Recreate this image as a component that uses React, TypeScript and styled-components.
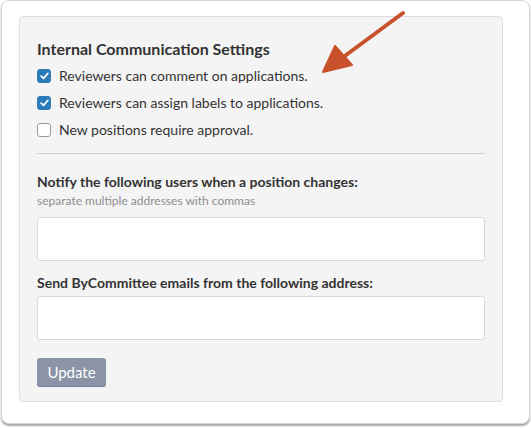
import styled, { createGlobalStyle } from "styled-components";

const GlobalStyle = createGlobalStyle`
  html, body {
    margin: 0;
    padding: 0;
    background: #ffffff;
  }
  body {
    font-family: Lato, "Liberation Sans", sans-serif;
    color: #333333;
  }
`;

const Frame = styled.div`
  position: relative;
  width: 531px;
  height: 428px;
  box-sizing: border-box;
  padding: 0 1px 4px 1px;
`;

const Card = styled.div`
  box-sizing: border-box;
  height: 424px;
  border: 1px solid #d6d6d6;
  border-radius: 8px;
  box-shadow: 0 2px 2px rgba(0, 0, 0, 0.35);
  background: #ffffff;
  padding: 15px 26px 22px 17px;
`;

const Panel = styled.form`
  box-sizing: border-box;
  height: 386px;
  background: #f4f4f4;
  border: 1px solid #dedede;
  border-radius: 4px;
  padding: 22px 17px 0 17px;
  display: flex;
  flex-direction: column;
`;

const Heading = styled.h3`
  margin: 0 0 3px;
  font-size: 16px;
  font-weight: 700;
  color: #333333;
  line-height: 20px;
`;

const CheckRow = styled.label`
  display: flex;
  align-items: center;
  gap: 8px;
  height: 27px;
  font-size: 14px;
  color: #333333;
`;

const Box = styled.span<{ $checked: boolean }>`
  width: 14px;
  height: 14px;
  box-sizing: border-box;
  border-radius: 3px;
  display: flex;
  align-items: center;
  justify-content: center;
  background: ${(p) => (p.$checked ? "#2b7bb9" : "#ffffff")};
  border: 1px solid ${(p) => (p.$checked ? "#2b7bb9" : "#9a9a9a")};
`;

const Divider = styled.hr`
  border: none;
  border-top: 1px solid #cfcfcf;
  margin: 10px 0 19px;
`;

const FieldLabel = styled.div`
  font-size: 14px;
  font-weight: 700;
  color: #333333;
  line-height: 18px;
`;

const Hint = styled.div`
  font-size: 12px;
  color: #8e8e8e;
  line-height: 16px;
  margin: 2px 0 4px;
`;

const Input = styled.input`
  box-sizing: border-box;
  width: 100%;
  height: 44px;
  margin: 4px 0 13px;
  border: 1px solid #d9d9d9;
  border-radius: 3px;
  background: #ffffff;
  outline: none;
`;

const Button = styled.button`
  align-self: flex-start;
  margin-top: 5px;
  width: 69px;
  height: 28px;
  border: none;
  border-radius: 3px;
  background: #8a94a6;
  box-shadow: 0 1px 0 #747e90;
  color: #ffffff;
  font-family: Lato, "Liberation Sans", sans-serif;
  font-size: 15px;
  padding: 0;
`;

const Arrow = styled.svg`
  position: absolute;
  left: 318px;
  top: 8px;
`;

const Check = () => (
  <svg width="9" height="8" viewBox="0 0 9 8">
    <path d="M1.2 4.2 L3.5 6.3 L7.8 1.5" fill="none" stroke="#fff" strokeWidth="1.8" strokeLinecap="round" strokeLinejoin="round" />
  </svg>
);

const options = [
  { text: "Reviewers can comment on applications.", checked: true },
  { text: "Reviewers can assign labels to applications.", checked: true },
  { text: "New positions require approval.", checked: false },
];

export default function App() {
  return (
    <>
      <GlobalStyle />
      <Frame>
        <Card>
          <Panel onSubmit={(e) => e.preventDefault()}>
            <Heading>Internal Communication Settings</Heading>
            {options.map((o) => (
              <CheckRow key={o.text}>
                <Box $checked={o.checked}>{o.checked && <Check />}</Box>
                {o.text}
              </CheckRow>
            ))}
            <Divider />
            <FieldLabel>Notify the following users when a position changes:</FieldLabel>
            <Hint>separate multiple addresses with commas</Hint>
            <Input type="text" />
            <FieldLabel>Send ByCommittee emails from the following address:</FieldLabel>
            <Input type="text" />
            <Button type="submit">Update</Button>
          </Panel>
        </Card>
        <Arrow width="92" height="70" viewBox="0 0 92 70">
          <path d="M85 5 L24 50" stroke="#c8522c" strokeWidth="4" strokeLinecap="round" />
          <path d="M5 64 L17 38 L34 57 Z" fill="#c8522c" stroke="#c8522c" strokeWidth="2" strokeLinejoin="round" />
        </Arrow>
      </Frame>
    </>
  );
}
